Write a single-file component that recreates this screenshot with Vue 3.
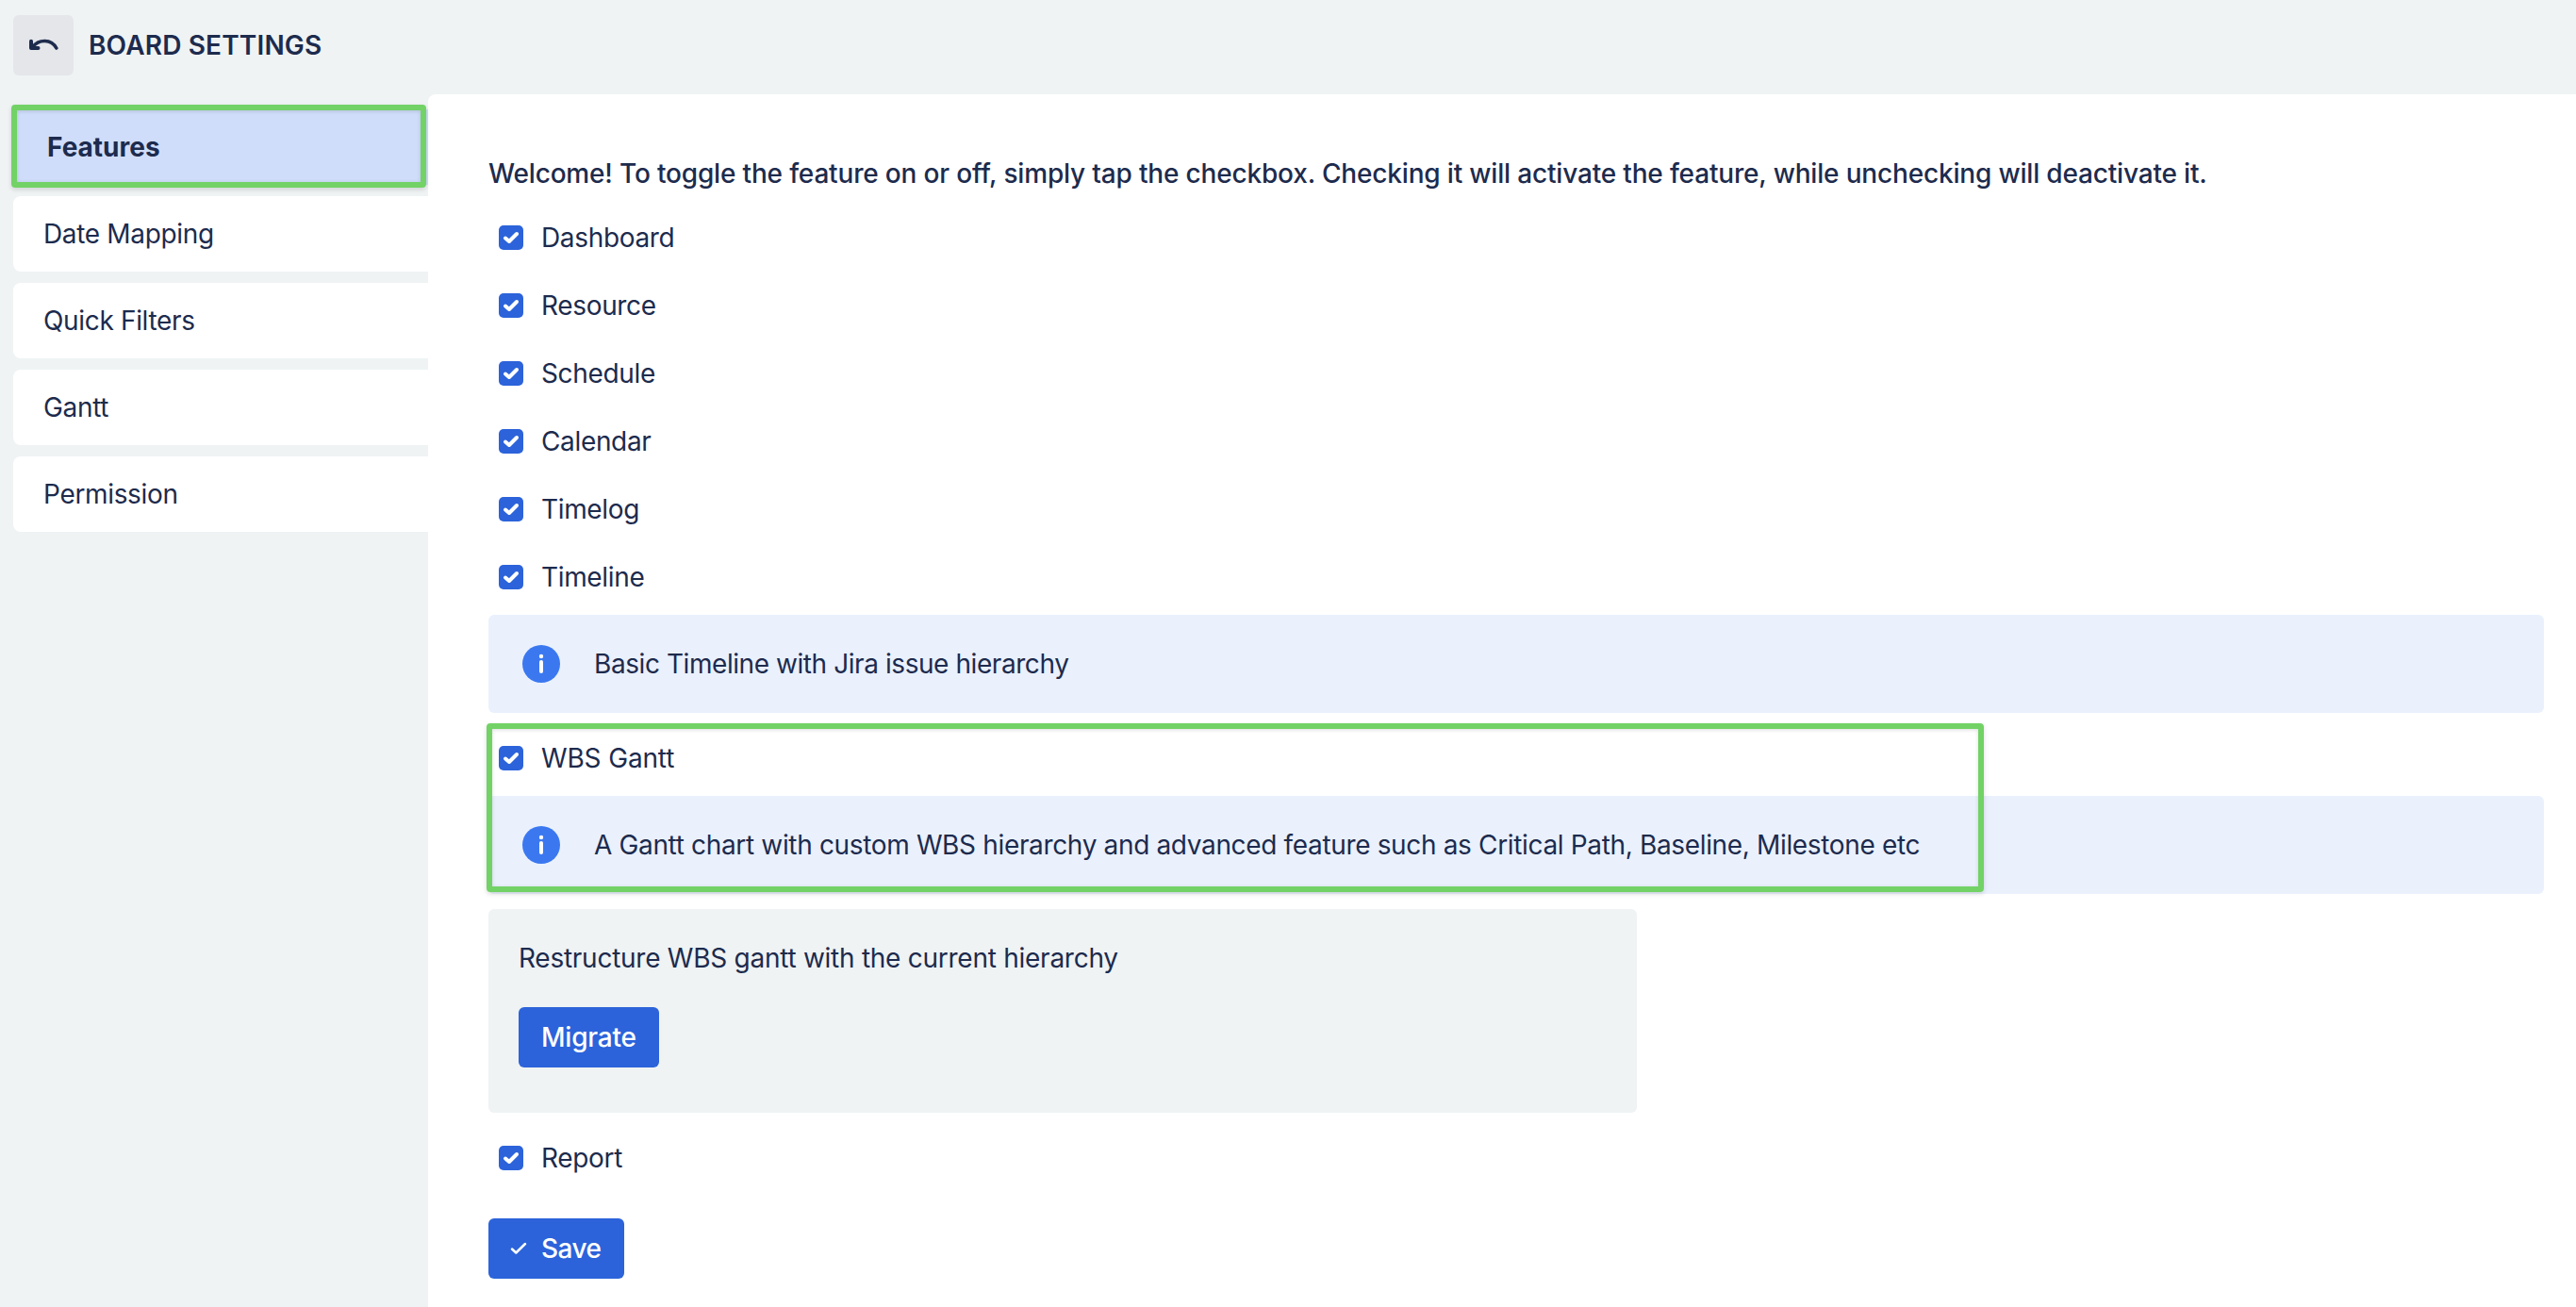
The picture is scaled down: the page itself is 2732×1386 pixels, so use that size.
<template>
  <div class="board-settings">
    <header class="header">
      <button class="back-button" aria-label="Back">
        <svg width="32" height="16" viewBox="0 0 32 16" fill="none">
          <path d="M3 3.800v7.200h7.500" stroke="#1d2b4d" stroke-width="4" stroke-linecap="round" stroke-linejoin="round" />
          <path d="M4.500 10C11 1.200 24.500 1 29.800 11" stroke="#1d2b4d" stroke-width="3.600" stroke-linecap="round" />
        </svg>
      </button>
      <h1 class="title">BOARD SETTINGS</h1>
    </header>

    <div class="body">
      <nav class="sidebar">
        <a
          v-for="tab in tabs"
          :key="tab"
          class="tab"
          :class="{ active: tab === activeTab }"
          @click="activeTab = tab"
        >
          <span>{{ tab }}</span>
        </a>
      </nav>

      <main class="panel">
        <p class="welcome">
          Welcome! To toggle the feature on or off, simply tap the checkbox. Checking it will activate the feature, while unchecking will deactivate it.
        </p>

        <div
          v-for="feature in features"
          :key="feature.name"
          class="feature"
          :class="{ highlighted: feature.highlighted }"
        >
          <label class="check-row">
            <input v-model="feature.enabled" type="checkbox" class="check-input" />
            <span class="check-box">
              <svg v-if="feature.enabled" width="26" height="26" viewBox="0 0 26 26" fill="none">
                <path d="M7 13.500L11 17L19 9" stroke="#fff" stroke-width="4" stroke-linecap="round" stroke-linejoin="round" />
              </svg>
            </span>
            <span class="check-label">{{ feature.name }}</span>
          </label>

          <div v-if="feature.info" class="info">
            <svg class="info-icon" width="40" height="40" viewBox="0 0 40 40">
              <circle cx="20" cy="20" r="20" fill="#3b78f0" />
              <circle cx="20" cy="12" r="2.200" fill="#fff" />
              <rect x="18" y="16" width="4" height="14" rx="2" fill="#fff" />
            </svg>
            <span class="info-text">{{ feature.info }}</span>
          </div>

          <div v-if="feature.migrate" class="migrate">
            <p class="migrate-text">Restructure WBS gantt with the current hierarchy</p>
            <button class="button">Migrate</button>
          </div>
        </div>

        <button class="button save">
          <svg width="18" height="14" viewBox="0 0 18 14" fill="none">
            <path d="M2 7.500L6.300 11.500L16 2" stroke="#fff" stroke-width="2.500" stroke-linecap="round" stroke-linejoin="round" />
          </svg>
          Save
        </button>
      </main>
    </div>
  </div>
</template>

<script setup>
import { ref } from 'vue';

const tabs = ['Features', 'Date Mapping', 'Quick Filters', 'Gantt', 'Permission'];
const activeTab = ref('Features');

const features = ref([
  { name: 'Dashboard', enabled: true },
  { name: 'Resource', enabled: true },
  { name: 'Schedule', enabled: true },
  { name: 'Calendar', enabled: true },
  { name: 'Timelog', enabled: true },
  { name: 'Timeline', enabled: true, info: 'Basic Timeline with Jira issue hierarchy' },
  {
    name: 'WBS Gantt',
    enabled: true,
    highlighted: true,
    migrate: true,
    info: 'A Gantt chart with custom WBS hierarchy and advanced feature such as Critical Path, Baseline, Milestone etc'
  },
  { name: 'Report', enabled: true }
]);
</script>

<style>
body {
  margin: 0;
  background-color: #eff3f4;
}
</style>

<style scoped>
.board-settings {
  display: flex;
  flex-direction: column;
  height: 100vh;
  overflow: hidden;
  background-color: #eff3f4;
  color: #1d2b4d;
  font-family: Inter, "Liberation Sans", sans-serif;
  font-size: 28px;
  line-height: 40px;
  letter-spacing: -0.34px;
}
.header {
  display: flex;
  align-items: center;
  gap: 16px;
  height: 64px;
  padding: 16px 14px 20px;
}
.back-button {
  display: flex;
  align-items: center;
  justify-content: center;
  width: 64px;
  height: 64px;
  padding: 0;
  border: none;
  border-radius: 6px;
  background-color: #e4e6ea;
}
.title {
  margin: 0;
  font-size: 28px;
  font-weight: 600;
  letter-spacing: 0.16px;
}
.body {
  display: flex;
  flex: 1;
}
.sidebar {
  display: flex;
  flex-direction: column;
  gap: 12px;
  width: 440px;
  padding: 16px 0 0 14px;
}
.tab {
  position: relative;
  display: flex;
  align-items: center;
  height: 80px;
  padding-left: 32px;
  border-radius: 8px 0 0 8px;
  background-color: #fff;
}
.tab.active {
  padding-left: 36px;
  background-color: #cfddfb;
  font-weight: 700;
  letter-spacing: 0;
}
.tab.active::after {
  content: '';
  position: absolute;
  top: -5px;
  left: -2px;
  right: 2px;
  bottom: -3px;
  box-sizing: border-box;
  border: 6px solid #72d266;
  border-radius: 4px;
  box-shadow: 0 2px 5px rgba(0, 0, 0, 0.14), inset 0 1px 4px rgba(0, 0, 0, 0.14);
}
.panel {
  flex: 1;
  padding: 64px 34px 0 64px;
  border-top-left-radius: 8px;
  background-color: #fff;
}
.welcome {
  margin: 0 0 12px;
  font-weight: 500;
  letter-spacing: -0.175px;
  white-space: nowrap;
}
.feature {
  position: relative;
}
.check-row {
  display: flex;
  align-items: center;
  height: 72px;
  padding-left: 11px;
}
.check-input {
  position: absolute;
  opacity: 0;
}
.check-box {
  display: flex;
  width: 26px;
  height: 26px;
  margin-right: 19px;
  border-radius: 5px;
  background-color: #2c63da;
}
.info {
  display: flex;
  align-items: center;
  height: 104px;
  margin: 4px 0 12px;
  padding-left: 36px;
  border-radius: 6px;
  background-color: #eaf1fd;
  letter-spacing: -0.43px;
}
.info-icon {
  margin-right: 36px;
}
.highlighted .check-row {
  letter-spacing: -0.15px;
}
.highlighted .info {
  margin-bottom: 16px;
  letter-spacing: -0.345px;
}
.highlighted::after {
  content: '';
  position: absolute;
  top: -1px;
  left: -2px;
  width: 1588px;
  height: 179px;
  box-sizing: border-box;
  border: 6px solid #72d266;
  border-radius: 4px;
  box-shadow: 0 2px 5px rgba(0, 0, 0, 0.14), inset 0 1px 4px rgba(0, 0, 0, 0.14);
  pointer-events: none;
}
.migrate {
  width: 1154px;
  height: 152px;
  margin-bottom: 12px;
  padding: 32px;
  border-radius: 6px;
  background-color: #eff3f4;
  letter-spacing: -0.26px;
}
.migrate-text {
  margin: 0 0 32px;
}
.button {
  display: flex;
  align-items: center;
  height: 64px;
  padding: 0 24px;
  border: none;
  border-radius: 6px;
  background-color: #2c63da;
  color: #fff;
  font: inherit;
  font-weight: 500;
  letter-spacing: -0.2px;
}
.save {
  gap: 15px;
  margin-top: 28px;
  padding: 0 24px 0 23px;
  letter-spacing: -0.5px;
}
</style>
